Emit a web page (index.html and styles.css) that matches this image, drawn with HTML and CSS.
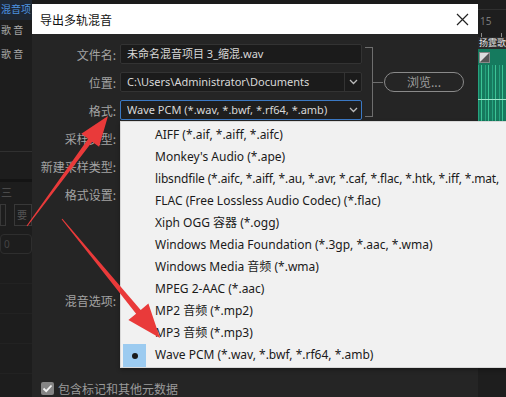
FILE: index.html
```html
<!DOCTYPE html>
<html lang="zh">
<head>
	<meta charset="UTF-8">
	<title>导出多轨混音</title>
	<link rel="stylesheet" href="styles.css">
</head>
<body>

<div class="app">
	<div class="side-left">
		<div class="track active">混音项</div>
		<div class="track">歌 音</div>
		<div class="track">歌 音</div>
		<div class="panel-gap"></div>
		<div class="panel-bar"></div>
		<div class="tabs">三</div>
		<div class="btn-row">
			<span class="mini-box"></span>
			<span class="mini-btn">要</span>
		</div>
		<div class="pill-box">0</div>
		<div class="rows">
			<div></div><div></div><div></div><div></div>
		</div>
	</div>
	<div class="middle"></div>
	<div class="side-right">
		<div class="ruler">
			<span>15</span>
			<div class="ticks"></div>
		</div>
		<div class="clip-title">扬霆歌</div>
		<div class="clip">
			<span class="clip-icon"></span>
			<div class="wave"></div>
		</div>
	</div>
</div>

<div class="dialog">
	<div class="titlebar">
		<span class="title">导出多轨混音</span>
		<svg class="close" width="13" height="13" viewBox="0 0 13 13">
			<path d="M1 1 L12 12 M12 1 L1 12" stroke="#222" stroke-width="1.2" fill="none"/>
		</svg>
	</div>
	<div class="body">
		<div class="top">
			<div class="fields">
				<div class="row">
					<label>文件名:</label>
					<div class="input"><span class="value">未命名混音项目 3_缩混.wav</span></div>
				</div>
				<div class="row">
					<label>位置:</label>
					<div class="input select">
						<span class="value">C:\Users\Administrator\Documents</span>
						<span class="caret">
							<svg width="9" height="6" viewBox="0 0 9 6"><path d="M1 1 L4.5 4.5 L8 1" stroke="#bbb" stroke-width="1.3" fill="none"/></svg>
						</span>
					</div>
				</div>
				<div class="row">
					<label>格式:</label>
					<div class="input select focused">
						<span class="value">Wave PCM (*.wav, *.bwf, *.rf64, *.amb)</span>
						<span class="caret">
							<svg width="9" height="6" viewBox="0 0 9 6"><path d="M1 1 L4.5 4.5 L8 1" stroke="#bbb" stroke-width="1.3" fill="none"/></svg>
						</span>
					</div>
				</div>
			</div>
			<div class="bracket"></div>
			<div class="stub"></div>
			<button class="browse">浏览...</button>
		</div>
		<div class="row"><label>采样类型:</label></div>
		<div class="row"><label>新建采样类型:</label></div>
		<div class="row"><label>格式设置:</label></div>
		<div class="row mix"><label>混音选项:</label></div>
		<div class="check-row">
			<span class="checkbox">
				<svg width="13" height="13" viewBox="0 0 13 13"><path d="M2.5 6.5 L5.2 9.2 L10.5 3.5" stroke="#f2f2f2" stroke-width="1.8" fill="none"/></svg>
			</span>
			<span>包含标记和其他元数据</span>
		</div>
	</div>

	<ul class="dropdown">
		<li>AIFF (*.aif, *.aiff, *.aifc)</li>
		<li>Monkey's Audio (*.ape)</li>
		<li class="long">libsndfile (*.aifc, *.aiff, *.au, *.avr, *.caf, *.flac, *.htk, *.iff, *.mat,</li>
		<li>FLAC (Free Lossless Audio Codec) (*.flac)</li>
		<li>Xiph OGG 容器 (*.ogg)</li>
		<li>Windows Media Foundation (*.3gp, *.aac, *.wma)</li>
		<li>Windows Media 音频 (*.wma)</li>
		<li>MPEG 2-AAC (*.aac)</li>
		<li>MP2 音频 (*.mp2)</li>
		<li>MP3 音频 (*.mp3)</li>
		<li class="selected"><span class="mark"><i></i></span>Wave PCM (*.wav, *.bwf, *.rf64, *.amb)</li>
	</ul>
</div>

<svg class="arrows" width="506" height="397" viewBox="0 0 506 397">
	<!-- arrow pointing at the format select -->
	<polygon fill="#e93a3a" points="27.4,226.3 26.6,225.7 88.2,138.7 81.3,133.7 108,116 99.1,146.7 92.2,141.7"/>
	<!-- arrow pointing at MP3 -->
	<polygon fill="#e93a3a" points="61.6,219.3 62.4,218.7 140.7,309.9 148.4,303.5 160,338 128.4,320.1 136.1,313.7"/>
</svg>

</body>
</html>
```

FILE: styles.css
```css
* {
	box-sizing: border-box;
	margin: 0;
	padding: 0;
}

body {
	width: 506px;
	height: 397px;
	overflow: hidden;
	background: #1b1b1b;
	font-family: "Noto Sans", "Noto Sans CJK SC", sans-serif;
	font-size: 12px;
	position: relative;
}

/* background app */

.app {
	display: flex;
	height: 397px;
}

.side-left {
	width: 32px;
	background: #1d1d1d;
	overflow: hidden;
	display: flex;
	flex-direction: column;
}

.track {
	height: 24px;
	line-height: 20px;
	white-space: nowrap;
	color: #a9a9a9;
	font-family: "Noto Sans CJK SC", sans-serif;
	font-size: 10px;
	padding-left: 1px;
}

.track.active {
	color: #4d94e0;
	background: #1e2733;
	height: 20px;
	line-height: 18px;
}

.panel-gap {
	height: 84px;
	border-bottom: 1px solid #303030;
}

.panel-bar {
	height: 30px;
	border-bottom: 3px solid #141414;
}

.tabs {
	height: 22px;
	color: #555;
	font-size: 11px;
	line-height: 22px;
	padding-left: 1px;
}

.btn-row {
	display: flex;
	gap: 8px;
	height: 22px;
}

.mini-box {
	width: 6px;
	border: 1px solid #383838;
}

.mini-btn {
	flex: 1;
	border: 1px solid #383838;
	color: #555;
	font-size: 10px;
	line-height: 20px;
	padding-left: 2px;
}

.pill-box {
	margin-top: 8px;
	height: 20px;
	border: 1px solid #2e2e2e;
	border-radius: 4px;
	color: #444;
	font-size: 10px;
	line-height: 18px;
	padding-left: 3px;
}

.rows div {
	height: 30px;
	border-bottom: 1px solid #222;
}

.middle {
	flex: 1;
}

.side-right {
	width: 28px;
	background: #1e1e1e;
	display: flex;
	flex-direction: column;
	overflow: hidden;
}

.ruler {
	height: 37px;
	border-top: 1px solid #2f2f2f;
	margin-top: 9px;
	color: #7a7a7a;
	font-size: 10px;
	padding: 5px 0 0 2px;
	line-height: 12px;
}

.ticks {
	height: 6px;
	margin-top: 6px;
	background: repeating-linear-gradient(90deg, transparent 0 1px, #888 1px 2px, transparent 2px 20px);
}

.clip-title {
	height: 12px;
	margin-top: -9px;
	background: #2a2a2a;
	color: #e6e6e6;
	font-family: "Noto Sans CJK SC", sans-serif;
	font-size: 9px;
	line-height: 12px;
	white-space: nowrap;
	padding-left: 1px;
}

.clip {
	height: 76px;
	background: #157a5e;
}

.clip-icon {
	display: block;
	width: 11px;
	height: 11px;
	margin: 3px 0 0 1px;
	background: linear-gradient(135deg, #ddd 0 45%, #555 55%);
	border: 1px solid #888;
}

.wave {
	height: 60px;
	margin-top: 2px;
	background:
		linear-gradient(#9ee8cc, #9ee8cc) 0 34px / 100% 1px no-repeat,
		repeating-linear-gradient(90deg, #26a37f 0 1px, #167a5e 1px 3px, #3cc496 3px 4px, #167a5e 4px 7px);
}

/* dialog */

.dialog {
	position: absolute;
	left: 32px;
	top: 4px;
	width: 446px;
	height: 400px;
	background: #252525;
}

.titlebar {
	height: 30px;
	background: #ffffff;
	display: flex;
	align-items: center;
	justify-content: space-between;
	padding: 0 9px 0 8px;
}

.title {
	color: #111;
	font-size: 12px;
	font-family: "Noto Sans CJK SC", sans-serif;
}

.body {
	padding-top: 10px;
	color: #a3a3a3;
}

.top {
	display: flex;
	align-items: center;
}

.fields {
	display: flex;
	flex-direction: column;
	gap: 8px;
}

.row {
	display: flex;
	align-items: center;
	height: 20px;
}

.body > .row {
	margin-top: 8px;
}

.body > .row:first-of-type {
	margin-top: 7px;
}

.row label {
	width: 85px;
	padding-right: 1px;
	text-align: right;
	font-family: "Noto Sans CJK SC", sans-serif;
	font-size: 12px;
	color: #a3a3a3;
	margin-right: 3px;
	white-space: nowrap;
}

.row.mix {
	margin-top: 86px;
}

.input {
	width: 242px;
	height: 20px;
	background: #1b1b1b;
	border: 1px solid #333;
	border-radius: 2px;
	color: #d8d8d8;
	font-size: 11px;
	line-height: 18px;
	padding-left: 6px;
	white-space: nowrap;
	overflow: hidden;
	display: flex;
}

.input .value {
	flex: 1;
	overflow: hidden;
}

.caret {
	width: 17px;
	border-left: 1px solid #333;
	display: flex;
	align-items: center;
	justify-content: center;
}

.focused {
	border-color: #3b79c4;
	background: #1e1e1e;
}

.focused .caret {
	border-left-color: transparent;
}

.bracket {
	width: 8px;
	height: 70px;
	margin-left: 3px;
	border: 1px solid #6e6e6e;
	border-left: none;
}

.stub {
	width: 10px;
	height: 1px;
	background: #6e6e6e;
}

.browse {
	width: 80px;
	height: 20px;
	margin-left: 1px;
	border: 1px solid #8a8a8a;
	border-radius: 10px;
	background: transparent;
	color: #9e9e9e;
	font-family: "Noto Sans CJK SC", sans-serif;
	font-size: 12px;
	line-height: 18px;
}

.check-row {
	display: flex;
	align-items: center;
	gap: 4px;
	margin: 70px 0 0 9px;
	font-family: "Noto Sans CJK SC", sans-serif;
	color: #9a9a9a;
	font-size: 12px;
}

.checkbox {
	width: 13px;
	height: 13px;
	background: #858585;
	border-radius: 2px;
	display: flex;
}

/* format list */

.dropdown {
	position: absolute;
	left: 88px;
	top: 117px;
	width: 400px;
	height: 247px;
	padding-top: 2px;
	background: #f1f1f1;
	border: 1px solid #d8d8d8;
	list-style: none;
	overflow: hidden;
	box-shadow: 0 2px 4px rgba(0, 0, 0, 0.3);
}

.dropdown li {
	height: 22px;
	line-height: 22px;
	padding-left: 34px;
	color: #1a1a1a;
	font-size: 12px;
	white-space: nowrap;
	position: relative;
}

.dropdown li.long {
	letter-spacing: -0.15px;
}

.dropdown .mark {
	position: absolute;
	left: 2px;
	top: 0;
	width: 23px;
	height: 23px;
	background: #9ccbf0;
	display: flex;
	align-items: center;
	justify-content: center;
}

.dropdown .mark i {
	width: 6px;
	height: 6px;
	border-radius: 50%;
	background: #1a1a1a;
}

/* annotation arrows */

.arrows {
	position: absolute;
	left: 0;
	top: 0;
	pointer-events: none;
}
```
